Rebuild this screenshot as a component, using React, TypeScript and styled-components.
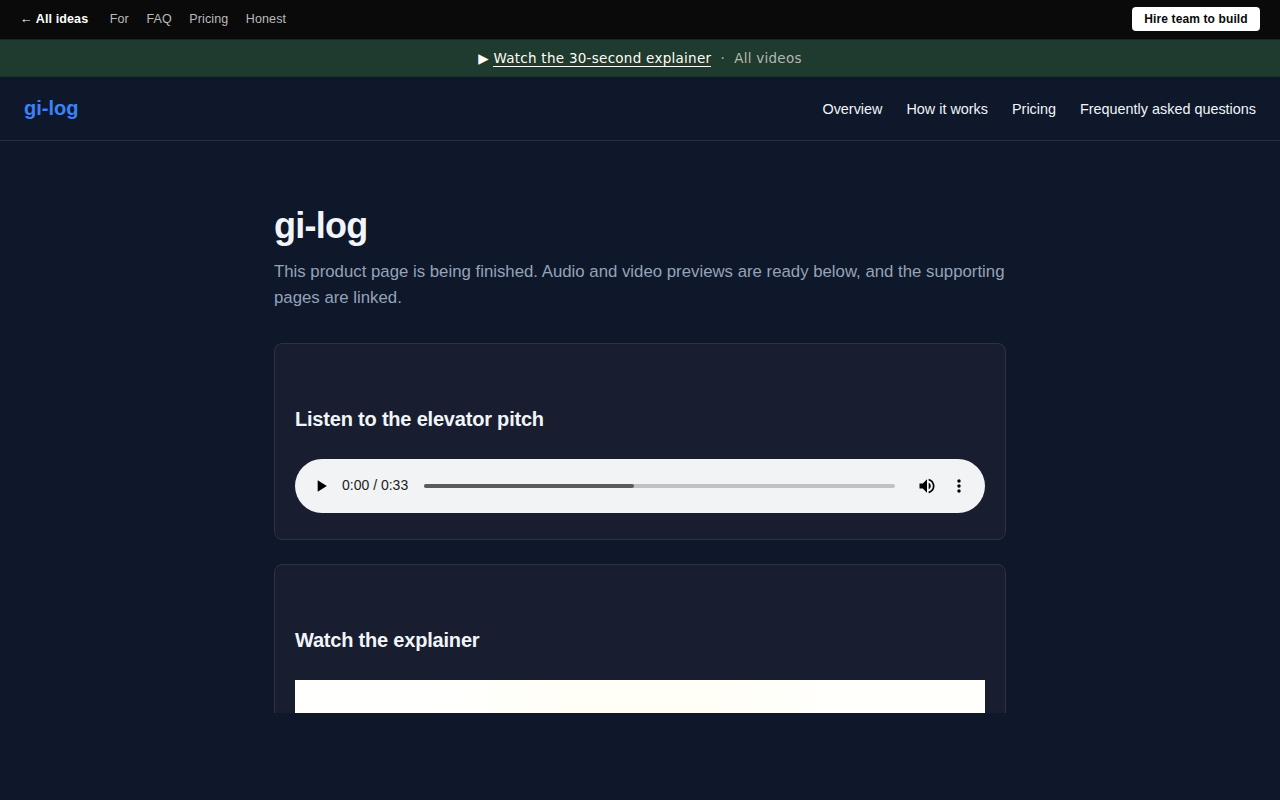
import React from "react";
import styled, { createGlobalStyle } from "styled-components";

const Global = createGlobalStyle`
  *, *::before, *::after { box-sizing: border-box; }
  html, body { margin: 0; height: 100%; overflow: hidden; }
  body { background: #0f172a; color: #f1f5f9; font: 16px/1.6 "Liberation Sans", Arial, sans-serif; }
  a { color: inherit; text-decoration: none; }
`;
const Page = styled.div`height: 800px; overflow: hidden;`;
const TopBar = styled.header`
  height: 40px; display: flex; align-items: center; justify-content: space-between;
  padding: 0 20px 2px; background: #0a0a0a; border-bottom: 1px solid #222; font-size: 13px; line-height: 1;
  letter-spacing: 0.12px;
`;
const TopLinks = styled.nav`display: flex; align-items: center; gap: 17.5px; line-height: 16px;`;
const TopLink = styled.a<{ $home?: boolean }>`
  color: ${p => (p.$home ? "#fff" : "#bbb")};
  font-size: 12.5px;
  font-weight: ${p => (p.$home ? 700 : 400)};
  margin-right: ${p => (p.$home ? 4 : 0)}px;
`;
const HireButton = styled.a`
  display: flex; align-items: center; justify-content: center; width: 128px; height: 24px; border-radius: 4px;
  background: #fff; color: #0a0a0a; font-size: 12px; font-weight: 700;
`;
const Banner = styled.div`
  height: 37px; display: flex; align-items: center; justify-content: center;
  background: #1f3a2e; border-bottom: 1px solid #1b3328; color: #fffdf5;
  font: 13.5px/20px "DejaVu Sans", sans-serif; letter-spacing: 0.27px; white-space: pre;
`;
const BannerLink = styled.a`border-bottom: 1px solid #fffdf5; line-height: 15px; padding-top: 1px;`;
const Muted = styled.span`color: #b2b9ae;`;
const SiteHeader = styled.header`
  height: 64px; padding: 0 24px; display: flex; align-items: center; justify-content: space-between;
  border-bottom: 1px solid #272e3f;
`;
const Brand = styled.a`color: #3b82f6; font-size: 20px; font-weight: 700; padding-bottom: 2px;`;
const SiteNav = styled.nav`display: flex; gap: 24px; font-size: 14.4px; padding-top: 2px;`;
const Main = styled.main`width: 732px; height: 572px; margin: 0 auto; padding-top: 62px; overflow: hidden;`;
const Title = styled.h1`margin: 0; font-size: 36px; line-height: 46px; letter-spacing: -0.72px;`;
const Lead = styled.p`margin: 10px 0 32px; font-size: 16.8px; line-height: 26px; color: #94a3b8;`;
const Card = styled.section<{ $tall?: boolean }>`
  height: ${p => (p.$tall ? 520 : 197)}px; margin-bottom: 24px; padding: 59px 20px 0;
  background: #181e2f; border: 1px solid #2a3343; border-radius: 8px;
`;
const CardTitle = styled.h2`margin: 0 0 23px; font-size: 20px; line-height: 33px; letter-spacing: -0.2px;`;
const Player = styled.div`
  height: 54px; border-radius: 27px; background: #f1f3f4; color: #202124;
  display: flex; align-items: center; padding: 0 16px;
`;
const Icon = styled.svg`width: 20px; height: 20px; fill: #000; flex: none;`;
const Time = styled.span`width: 82px; margin-left: 11px; font-size: 14px; line-height: 20px; padding-bottom: 2px; white-space: nowrap;`;
const Track = styled.div`width: 471px; height: 4px; border-radius: 2px; background: #bfc1c2; margin-right: 22px;`;
const Buffered = styled.div`width: 210px; height: 4px; border-radius: 2px; background: #595b5e;`;
const Controls = styled.div`display: flex; gap: 12px;`;
const Video = styled.div`height: 388px; background: linear-gradient(90deg, #fffffd 20%, #fffef7 38%, #fffef7 62%, #fffffc 80%);`;

const navItems = ["Overview", "How it works", "Pricing", "Frequently asked questions"];

export default function App() {
  return (
    <Page>
      <Global />
      <TopBar>
        <TopLinks>
          <TopLink $home>← All ideas</TopLink>
          {["For", "FAQ", "Pricing", "Honest"].map(t => <TopLink key={t}>{t}</TopLink>)}
        </TopLinks>
        <HireButton>Hire team to build</HireButton>
      </TopBar>
      <Banner>
        <span>▶ </span><BannerLink>Watch the 30-second explainer</BannerLink>
        <Muted>{"  ·  "}</Muted><Muted>All videos</Muted>
      </Banner>
      <SiteHeader>
        <Brand>gi-log</Brand>
        <SiteNav>{navItems.map(t => <a key={t}>{t}</a>)}</SiteNav>
      </SiteHeader>
      <Main>
        <Title>gi-log</Title>
        <Lead>This product page is being finished. Audio and video previews are ready below, and the supporting pages are linked.</Lead>
        <Card>
          <CardTitle>Listen to the elevator pitch</CardTitle>
          <Player>
            <Icon viewBox="0 0 24 24"><path d="M8 5v14l11-7z" /></Icon>
            <Time>0:00 / 0:33</Time>
            <Track><Buffered /></Track>
            <Controls>
              <Icon viewBox="0 0 24 24"><path d="M3 9v6h4l5 5V4L7 9H3zm13.5 3c0-1.77-1.02-3.29-2.5-4.03v8.05c1.48-.73 2.5-2.25 2.5-4.02zM14 3.23v2.06c2.89.86 5 3.54 5 6.71s-2.11 5.85-5 6.71v2.06c4.01-.91 7-4.49 7-8.77s-2.99-7.86-7-8.77z" /></Icon>
              <Icon viewBox="0 0 24 24"><path d="M12 8c1.1 0 2-.9 2-2s-.9-2-2-2-2 .9-2 2 .9 2 2 2zm0 2c-1.1 0-2 .9-2 2s.9 2 2 2 2-.9 2-2-.9-2-2-2zm0 6c-1.1 0-2 .9-2 2s.9 2 2 2 2-.9 2-2-.9-2-2-2z" /></Icon>
            </Controls>
          </Player>
        </Card>
        <Card $tall>
          <CardTitle>Watch the explainer</CardTitle>
          <Video />
        </Card>
      </Main>
    </Page>
  );
}
